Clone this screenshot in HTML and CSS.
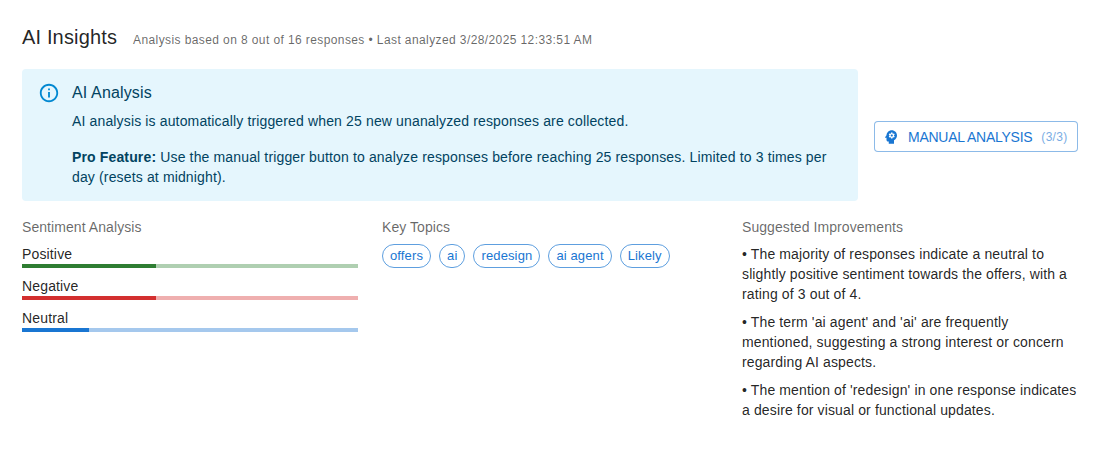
FILE: index.html
```html
<!DOCTYPE html>
<html lang="en">
<head>
  <meta charset="UTF-8">
  <title>AI Insights</title>
  <link rel="stylesheet" href="styles.css">
</head>
<body>
  <div class="panel">
    <div class="panel-head">
      <h2 class="panel-title">AI Insights</h2>
      <span class="panel-meta">Analysis based on 8 out of 16 responses • Last analyzed 3/28/2025 12:33:51 AM</span>
    </div>

    <div class="notice-row">
      <div class="alert">
        <svg class="alert-icon" viewBox="0 0 24 24" aria-hidden="true"><path d="M11 7h2v2h-2zm0 4h2v6h-2zm1-9C6.48 2 2 6.48 2 12s4.48 10 10 10 10-4.48 10-10S17.52 2 12 2zm0 18c-4.41 0-8-3.59-8-8s3.59-8 8-8 8 3.59 8 8-3.59 8-8 8z"/></svg>
        <div class="alert-body">
          <div class="alert-title">AI Analysis</div>
          <p class="alert-text">AI analysis is automatically triggered when 25 new unanalyzed responses are collected.</p>
          <p class="alert-text"><strong>Pro Feature:</strong> Use the manual trigger button to analyze responses before reaching 25 responses. Limited to 3 times per day (resets at midnight).</p>
        </div>
      </div>
      <button class="manual-btn">
        <svg class="manual-icon" viewBox="0 0 24 24" aria-hidden="true"><path d="M13 8.57c-.79 0-1.43.64-1.43 1.43s.64 1.43 1.43 1.43 1.43-.64 1.43-1.43-.64-1.43-1.43-1.43z"/><path d="M13 3C9.25 3 6.2 5.94 6.02 9.64L4.1 12.2c-.25.33-.01.8.4.8H6v3c0 1.1.9 2 2 2h1v3h7v-4.68c2.36-1.12 4-3.53 4-6.32 0-3.87-3.13-7-7-7zm3 7c0 .13-.01.26-.03.39l.83.66c.08.06.1.16.05.25l-.8 1.39c-.05.09-.16.12-.24.09l-.99-.4c-.21.16-.43.29-.67.39L14 13.83c-.01.1-.1.17-.2.17h-1.6c-.1 0-.18-.07-.2-.17l-.15-1.06c-.25-.1-.47-.23-.68-.39l-.99.4c-.09.03-.2 0-.25-.09l-.8-1.39c-.05-.08-.03-.19.05-.25l.84-.66c-.02-.13-.03-.26-.03-.39 0-.13.02-.27.04-.39l-.85-.66c-.08-.06-.1-.16-.05-.26l.8-1.38c.05-.09.15-.12.24-.09l1 .4c.2-.15.43-.29.67-.39L12 6.17c.02-.1.1-.17.2-.17h1.6c.1 0 .18.07.2.17l.15 1.06c.24.1.46.23.67.39l1-.4c.09-.03.2 0 .24.09l.8 1.38c.05.09.03.2-.05.26l-.85.66c.03.12.04.25.04.39z"/></svg>
        <span class="manual-label">Manual Analysis</span>
        <span class="manual-count">(3/3)</span>
      </button>
    </div>

    <div class="columns">
      <section class="column">
        <h3 class="column-title">Sentiment Analysis</h3>
        <div class="sentiment">
          <div class="sentiment-label">Positive</div>
          <div class="bar bar-positive"><div class="bar-fill" style="width: 40%"></div></div>
        </div>
        <div class="sentiment">
          <div class="sentiment-label">Negative</div>
          <div class="bar bar-negative"><div class="bar-fill" style="width: 40%"></div></div>
        </div>
        <div class="sentiment">
          <div class="sentiment-label">Neutral</div>
          <div class="bar bar-neutral"><div class="bar-fill" style="width: 20%"></div></div>
        </div>
      </section>

      <section class="column">
        <h3 class="column-title">Key Topics</h3>
        <div class="chips">
          <span class="chip">offers</span>
          <span class="chip">ai</span>
          <span class="chip">redesign</span>
          <span class="chip">ai agent</span>
          <span class="chip">Likely</span>
        </div>
      </section>

      <section class="column">
        <h3 class="column-title">Suggested Improvements</h3>
        <p class="improvement">• The majority of responses indicate a neutral to slightly positive sentiment towards the offers, with a rating of 3 out of 4.</p>
        <p class="improvement">• The term 'ai agent' and 'ai' are frequently mentioned, suggesting a strong interest or concern regarding AI aspects.</p>
        <p class="improvement">• The mention of 'redesign' in one response indicates a desire for visual or functional updates.</p>
      </section>
    </div>
  </div>
</body>
</html>
```

FILE: styles.css
```css
body {
  margin: 0;
  background: #fff;
  color: rgba(0, 0, 0, 0.87);
  font-family: "Liberation Sans", Arial, sans-serif;
}
.panel {
  padding: 23px 24px 0 22px;
}
.panel-head {
  display: flex;
  align-items: center;
  gap: 16px;
  margin-bottom: 19px;
}
.panel-title {
  margin: 0;
  font-size: 20px;
  font-weight: 400;
  line-height: 24px;
  letter-spacing: 0.15px;
}
.panel-meta {
  font-size: 12px;
  line-height: 20px;
  padding-top: 7px;
  letter-spacing: 0.4px;
  color: rgba(0, 0, 0, 0.6);
}
.notice-row {
  display: flex;
  align-items: center;
  gap: 16px;
  margin-bottom: 16px;
}
.alert {
  flex: 1;
  display: flex;
  box-sizing: border-box;
  padding: 6px 16px;
  border-radius: 4px;
  background: #e5f6fd;
  color: #014361;
}
.alert-icon {
  flex: none;
  width: 22px;
  height: 22px;
  margin: 7px 12px 0 0;
  fill: #0288d1;
}
.alert-body {
  padding: 8px 0;
}
.alert-title {
  font-size: 16px;
  line-height: 20px;
  letter-spacing: 0.14px;
  margin-bottom: 8px;
}
.alert-text {
  margin: 0 0 16px;
  font-size: 14px;
  line-height: 20px;
  letter-spacing: 0.145px;
}
.alert-text:last-child {
  margin-bottom: 0;
}
.alert-text strong {
  font-weight: 700;
}
.manual-btn {
  flex: none;
  display: flex;
  align-items: center;
  height: 31px;
  width: 204px;
  box-sizing: border-box;
  margin-top: 3px;
  padding: 0 7px;
  border: 1px solid rgba(25, 118, 210, 0.5);
  border-radius: 4px;
  background: #fff;
  color: #1976d2;
  font-family: inherit;
  font-size: 14px;
  text-transform: uppercase;
  white-space: nowrap;
}
.manual-icon {
  width: 18px;
  height: 18px;
  margin-right: 8px;
  fill: #1976d2;
}
.manual-label {
  letter-spacing: -0.27px;
}
.manual-count {
  margin-left: 9px;
  font-size: 12px;
  letter-spacing: 0.3px;
  opacity: 0.6;
}
.columns {
  display: grid;
  grid-template-columns: repeat(3, 360px);
}
.column {
  padding-right: 24px;
  box-sizing: border-box;
}
.column-title {
  margin: 0 0 7px;
  font-size: 14px;
  font-weight: 400;
  line-height: 20px;
  letter-spacing: 0.07px;
  color: rgba(0, 0, 0, 0.6);
}
.sentiment {
  margin-bottom: 8px;
}
.sentiment-label {
  font-size: 14px;
  line-height: 20px;
  letter-spacing: 0.15px;
}
.bar {
  height: 4px;
  overflow: hidden;
}
.bar-fill {
  height: 100%;
}
.bar-positive { background: #afcfb1; }
.bar-positive .bar-fill { background: #2e7d32; }
.bar-negative { background: #efafaf; }
.bar-negative .bar-fill { background: #d32f2f; }
.bar-neutral { background: #a5c8ed; }
.bar-neutral .bar-fill { background: #1976d2; }
.chips {
  display: flex;
  flex-wrap: wrap;
  gap: 8px;
}
.chip {
  height: 24px;
  box-sizing: border-box;
  padding: 0 7px;
  border: 1px solid rgba(25, 118, 210, 0.7);
  border-radius: 12px;
  color: #1976d2;
  font-size: 13px;
  line-height: 22px;
  letter-spacing: 0.13px;
}
.improvement {
  margin: 0 0 8px;
  font-size: 14px;
  line-height: 20px;
  letter-spacing: 0.13px;
}
```
